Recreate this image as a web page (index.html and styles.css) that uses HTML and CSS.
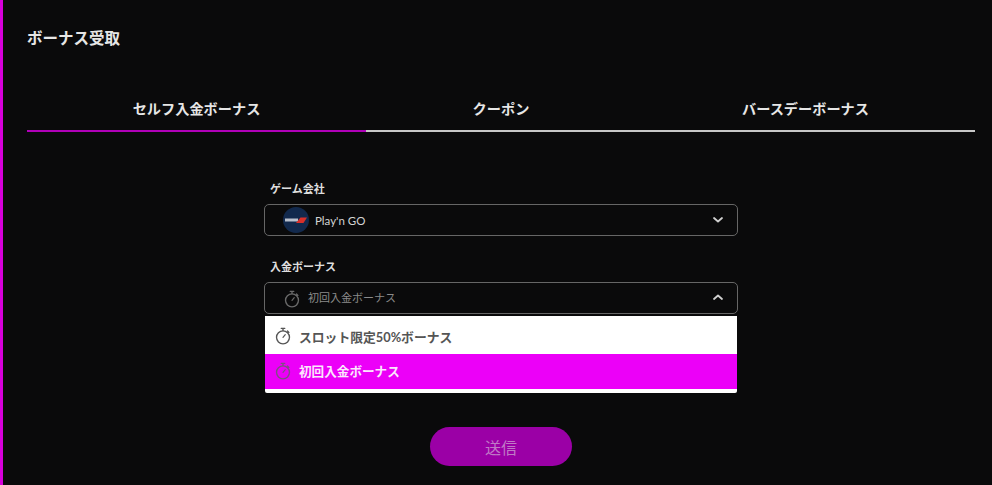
FILE: index.html
```html
<!DOCTYPE html>
<html lang="ja">
<head>
    <meta charset="UTF-8">
    <title>ボーナス受取</title>
    <link rel="stylesheet" href="styles.css">
</head>
<body>
    <svg class="defs" width="0" height="0">
        <symbol id="timer" viewBox="0 0 20 20">
            <path d="M8 1.5h4M10 1.5v2.500M15 4.500l1.500 1.500" fill="none" stroke="currentColor" stroke-width="1.500" stroke-linecap="round"/>
            <circle cx="10" cy="11.500" r="7.200" fill="none" stroke="currentColor" stroke-width="1.500"/>
            <path d="M10 11.500l2.500-3" fill="none" stroke="currentColor" stroke-width="1.300" stroke-linecap="round"/>
        </symbol>
    </svg>

    <div class="container">
        <h1>ボーナス受取</h1>

        <div class="tabs">
            <div class="tab tab-active">セルフ入金ボーナス</div>
            <div class="tab tab-middle">クーポン</div>
            <div class="tab">バースデーボーナス</div>
        </div>

        <form class="bonus-form">
            <label class="field-label">ゲーム会社</label>
            <div class="select">
                <svg class="provider-logo" viewBox="0 0 26 26">
                    <circle cx="13" cy="13" r="13" fill="#12294d"/>
                    <rect x="2" y="11.500" width="13" height="3" fill="#b9c0cd"/>
                    <path d="M13 16l4.500-5.500H24l-3.500 5.500z" fill="#d8302a"/>
                </svg>
                <span class="select-text provider-name">Play'n GO</span>
                <svg class="chevron" viewBox="0 0 12 8"><path d="M2 2l4 3.500L10 2" fill="none" stroke="currentColor" stroke-width="1.800" stroke-linecap="round" stroke-linejoin="round"/></svg>
            </div>

            <label class="field-label label-second">入金ボーナス</label>
            <div class="select-wrap">
                <div class="select select-open">
                    <svg class="timer-icon"><use href="#timer"/></svg>
                    <span class="select-text">初回入金ボーナス</span>
                    <svg class="chevron" viewBox="0 0 12 8"><path d="M2 6l4-3.500L10 6" fill="none" stroke="currentColor" stroke-width="1.800" stroke-linecap="round" stroke-linejoin="round"/></svg>
                </div>
                <ul class="menu">
                    <li class="menu-item">
                        <svg class="menu-icon"><use href="#timer"/></svg>
                        スロット限定50%ボーナス
                    </li>
                    <li class="menu-item menu-item-selected">
                        <svg class="menu-icon"><use href="#timer"/></svg>
                        初回入金ボーナス
                    </li>
                </ul>
            </div>

            <button type="button" class="submit-btn">送信</button>
        </form>
    </div>
</body>
</html>
```

FILE: styles.css
```css
html, body {
    height: 100%;
}

body {
    margin: 0;
    background-color: #0a0a0b;
    color: #e6e6e6;
    font-family: "Lato", "Noto Sans CJK JP", sans-serif;
    overflow: hidden;
}

.defs {
    position: absolute;
}

.container {
    height: 485px;
    box-sizing: border-box;
    border-left: 3px solid #d800dc;
    padding: 29px 17px 0 24px;
}

h1 {
    margin: 0;
    font-size: 15.5px;
    line-height: 18px;
    font-weight: 700;
}

.tabs {
    display: flex;
    margin-top: 52px;
}

.tab {
    flex: 0 0 339px;
    height: 31px;
    line-height: 20px;
    text-align: center;
    font-size: 14.2px;
    font-weight: 700;
    border-bottom: 2px solid #c8c8c8;
}

.tab-middle {
    flex-basis: 270px;
}

.tab-active {
    border-bottom-color: #b000b8;
}

.bonus-form {
    width: 474px;
    margin: 49px auto 0;
    display: flex;
    flex-direction: column;
}

.field-label {
    margin-left: 6px;
    font-size: 11px;
    line-height: 16px;
    font-weight: 700;
    color: #dedede;
}

.label-second {
    margin-top: 23px;
}

.select {
    height: 32px;
    box-sizing: border-box;
    margin-top: 7px;
    padding: 0 13px 0 18px;
    display: flex;
    align-items: center;
    border: 1px solid #666;
    border-radius: 5px;
    font-size: 11px;
    color: #c4c4c4;
}

.select-wrap {
    position: relative;
}

.select-open {
    padding-bottom: 2px;
    color: #8a8a8a;
}

.provider-logo {
    width: 26px;
    height: 26px;
    margin-right: 6px;
}

.select-text {
    flex: 1;
}

.provider-name {
    font-size: 11.5px;
    color: #d4d4d4;
}

.timer-icon {
    width: 18px;
    height: 18px;
    margin: 3px 7px 0 0;
    color: #6a6a6a;
}

.chevron {
    width: 12px;
    height: 8px;
    color: #d0d0d0;
}

.menu {
    position: absolute;
    left: 1px;
    right: 1px;
    top: 41px;
    height: 77px;
    box-sizing: border-box;
    margin: 0;
    padding: 0;
    list-style: none;
    background-color: #fff;
    border-radius: 0 0 2px 2px;
    z-index: 2;
}

.menu-item {
    height: 38px;
    box-sizing: border-box;
    padding: 2px 0 0 9px;
    display: flex;
    align-items: center;
    font-size: 12.8px;
    font-weight: 700;
    color: #555;
}

.menu-item-selected {
    height: 35px;
    padding: 0 0 2px 9px;
    font-size: 12.6px;
    background-color: #ec00f8;
    color: #fbe6fc;
}

.menu-icon {
    width: 18px;
    height: 20px;
    margin-right: 7px;
    color: #555;
}

.menu-item-selected .menu-icon {
    color: #7c5080;
}

.submit-btn {
    width: 142px;
    height: 39px;
    margin: 113px auto 0;
    border: none;
    border-radius: 20px;
    background-color: #9b00a6;
    color: #c07ac6;
    font-family: inherit;
    font-size: 16px;
    font-weight: 400;
}
```
